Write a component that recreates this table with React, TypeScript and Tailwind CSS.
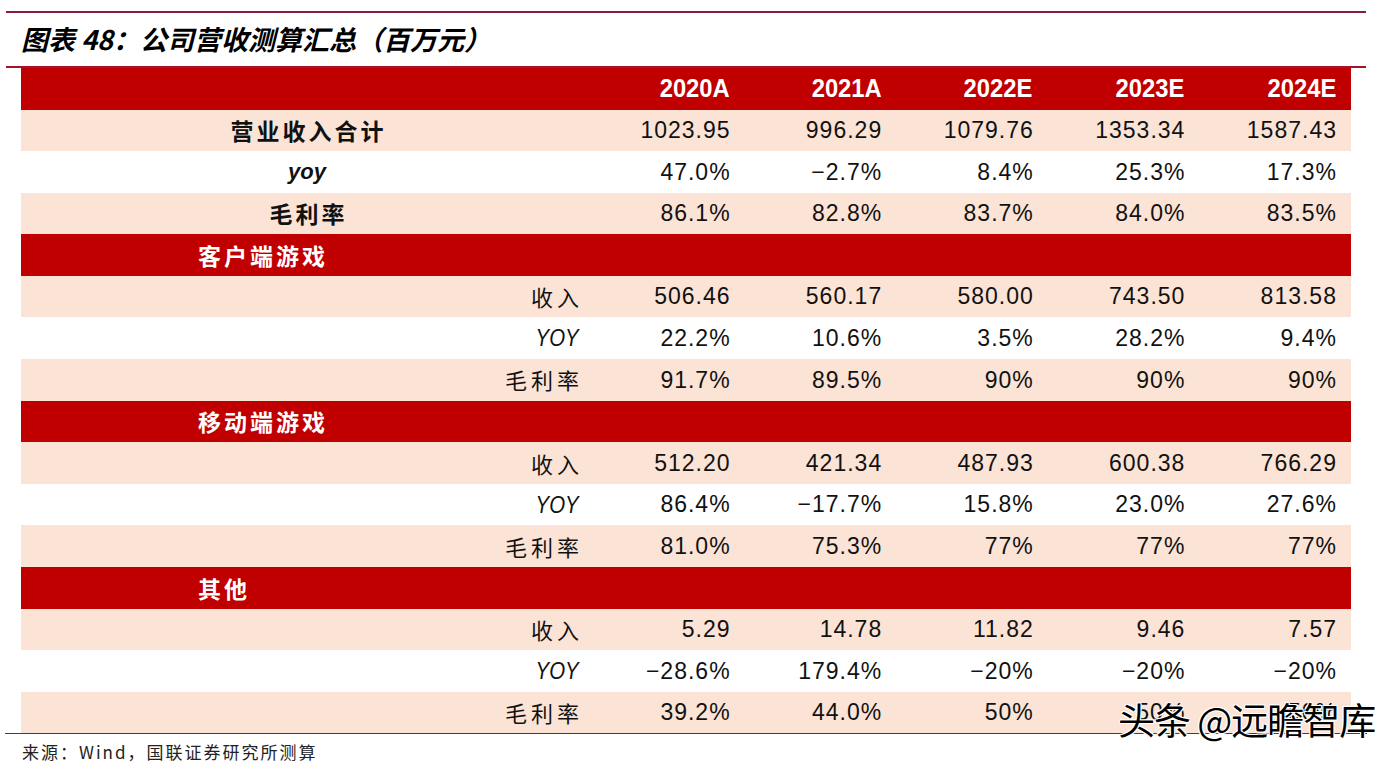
import React from "react";

type Row = {
  kind: "top" | "section" | "sub";
  label: string;
  values?: string[];
  shade?: boolean;
  italic?: boolean;
};

const years = ["2020A", "2021A", "2022E", "2023E", "2024E"];

const rows: Row[] = [
  { kind: "top", label: "营业收入合计", values: ["1023.95", "996.29", "1079.76", "1353.34", "1587.43"], shade: true },
  { kind: "top", label: "yoy", values: ["47.0%", "-2.7%", "8.4%", "25.3%", "17.3%"], italic: true },
  { kind: "top", label: "毛利率", values: ["86.1%", "82.8%", "83.7%", "84.0%", "83.5%"], shade: true },
  { kind: "section", label: "客户端游戏" },
  { kind: "sub", label: "收入", values: ["506.46", "560.17", "580.00", "743.50", "813.58"], shade: true },
  { kind: "sub", label: "YOY", values: ["22.2%", "10.6%", "3.5%", "28.2%", "9.4%"], italic: true },
  { kind: "sub", label: "毛利率", values: ["91.7%", "89.5%", "90%", "90%", "90%"], shade: true },
  { kind: "section", label: "移动端游戏" },
  { kind: "sub", label: "收入", values: ["512.20", "421.34", "487.93", "600.38", "766.29"], shade: true },
  { kind: "sub", label: "YOY", values: ["86.4%", "-17.7%", "15.8%", "23.0%", "27.6%"], italic: true },
  { kind: "sub", label: "毛利率", values: ["81.0%", "75.3%", "77%", "77%", "77%"], shade: true },
  { kind: "section", label: "其他" },
  { kind: "sub", label: "收入", values: ["5.29", "14.78", "11.82", "9.46", "7.57"], shade: true },
  { kind: "sub", label: "YOY", values: ["-28.6%", "179.4%", "-20%", "-20%", "-20%"], italic: true },
  { kind: "sub", label: "毛利率", values: ["39.2%", "44.0%", "50%", "50%", "50%"], shade: true },
];

const cjk = "font-['Noto_Sans_CJK_SC',sans-serif]";
const num = "font-['Liberation_Sans',sans-serif]";

function Label({ row }: { row: Row }) {
  if (row.kind === "top") {
    return (
      <div className="w-[572px] flex justify-center items-center">
        {row.italic ? (
          <span className="font-['Liberation_Sans',sans-serif] italic font-bold text-[22px]">{row.label}</span>
        ) : (
          <span className={`${cjk} font-bold text-[23px] tracking-[3px] mr-[-3px]`}>{row.label}</span>
        )}
      </div>
    );
  }
  if (row.kind === "section") {
    return (
      <div className="w-[572px] pl-[177px] flex items-center">
        <span className={`${cjk} font-bold text-[23px] tracking-[3px] text-white`}>{row.label}</span>
      </div>
    );
  }
  return (
    <div className="w-[572px] pr-[14px] flex justify-end items-center">
      {row.italic ? (
        <span className={`${num} italic text-[24px] scale-x-[0.85] origin-right`}>{row.label}</span>
      ) : (
        <span className={`${cjk} text-[22px] tracking-[4px] mr-[-4px]`}>{row.label}</span>
      )}
    </div>
  );
}

export default function App() {
  return (
    <div className="w-[1400px] h-[770px] bg-white relative overflow-hidden text-[#111]">
      <div className="pt-[11px] pl-[6px] w-[1366px]">
        <div className="h-[2px] bg-[#8c1a3c]" />
        <div className="h-[53px] pl-[15px] flex items-center">
          <span className={`${cjk} italic font-bold text-[27px] text-black`}>
            图表 48：公司营收测算汇总（百万元）
          </span>
        </div>
        <div className="h-[2px] bg-[#a8102c]" />
      </div>

      <div className="ml-[21px] w-[1330px]">
        <div className="flex h-[41.5px] bg-[#c00000]">
          <div className="w-[572px]" />
          {years.map((y) => (
            <div key={y} className="w-[151.6px] pr-[15px] flex justify-end items-center">
              <span className={`${num} font-bold text-[25px] text-white scale-x-95 origin-right`}>{y}</span>
            </div>
          ))}
        </div>
        {rows.map((row, i) => (
          <div
            key={i}
            className={`flex h-[41.6px] ${
              row.kind === "section" ? "bg-[#c00000]" : row.shade ? "bg-[#fbe3d6]" : "bg-white"
            }`}
          >
            <Label row={row} />
            {row.values?.map((v, j) => (
              <div key={j} className="w-[151.6px] pr-[15px] flex justify-end items-center">
                <span className={`${num} text-[23px] tracking-[1px] mr-[-1px]`}>
                  {v.replace("-", "−")}
                </span>
              </div>
            ))}
          </div>
        ))}
      </div>

      <div className="ml-[5px] w-[1362px] h-px bg-[#8c1a3c]" />
      <div className={`${cjk} pl-[22px] pt-[5px] text-[17px] text-[#222] tracking-[2px]`}>
        来源：Wind，国联证券研究所测算
      </div>

      <div
        className={`${cjk} absolute left-[1118px] top-[692px] text-[37px] tracking-[-1px] text-black [text-shadow:1px_1px_0_#fff,-1px_-1px_0_#fff,1px_-1px_0_#fff,-1px_1px_0_#fff]`}
      >
        头条 @远瞻智库
      </div>
    </div>
  );
}
